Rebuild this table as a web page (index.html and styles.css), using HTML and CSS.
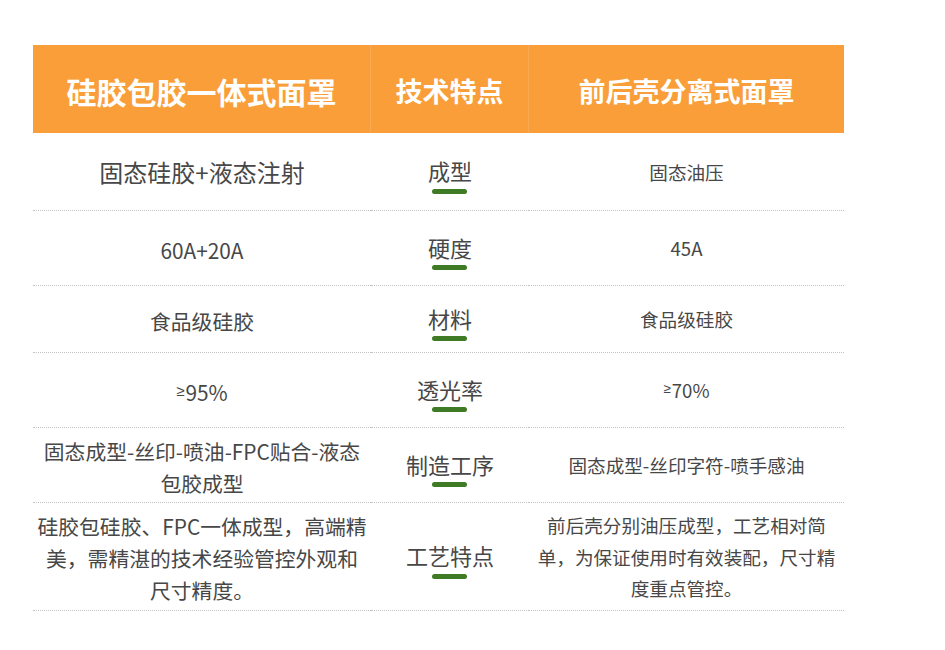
FILE: index.html
```html
<!DOCTYPE html>
<html lang="zh-CN">
<head>
<meta charset="utf-8">
<title>硅胶包胶一体式面罩 vs 前后壳分离式面罩</title>
<link rel="stylesheet" href="styles.css">
</head>
<body>
<div class="table">
  <div class="th th-left big">硅胶包胶一体式面罩</div>
  <div class="th th-mid">技术特点</div>
  <div class="th th-right">前后壳分离式面罩</div>

  <div class="td left xl">固态硅胶+液态注射</div>
  <div class="td mid"><span class="label">成型</span></div>
  <div class="td right">固态油压</div>

  <div class="td left">60A+20A</div>
  <div class="td mid"><span class="label">硬度</span></div>
  <div class="td right">45A</div>

  <div class="td left">食品级硅胶</div>
  <div class="td mid"><span class="label">材料</span></div>
  <div class="td right">食品级硅胶</div>

  <div class="td left"><span class="ge">≥</span>95%</div>
  <div class="td mid"><span class="label">透光率</span></div>
  <div class="td right"><span class="ge">≥</span>70%</div>

  <div class="td left">固态成型-丝印-喷油-FPC贴合-液态<br>包胶成型</div>
  <div class="td mid"><span class="label">制造工序</span></div>
  <div class="td right">固态成型-丝印字符-喷手感油</div>

  <div class="td left">硅胶包硅胶、FPC一体成型，高端精<br>美，需精湛的技术经验管控外观和<br>尺寸精度。</div>
  <div class="td mid"><span class="label">工艺特点</span></div>
  <div class="td right">前后壳分别油压成型，工艺相对简<br>单，为保证使用时有效装配，尺寸精<br>度重点管控。</div>
</div>
</body>
</html>
```
FILE: styles.css
```css
html, body {
  margin: 0;
  padding: 0;
  background: #ffffff;
}

body {
  padding: 45px 0 0 33px;
  font-family: "Noto Sans CJK SC", "Noto Sans", sans-serif;
  color: #474747;
}

.table {
  display: grid;
  grid-template-columns: 338px 158px 315px;
  grid-template-rows: 88px 78px 75px 67px 75px 75px 108px;
  width: 811px;
}

.th {
  background: #f99e39;
  color: #ffffff;
  font-weight: 700;
  font-size: 27px;
  display: flex;
  align-items: center;
  justify-content: center;
  padding-top: 3px;
  box-sizing: border-box;
}

.th-left {
  border-right: 1px solid rgba(255, 255, 255, 0.12);
}

.th-mid {
  border-right: 1px solid rgba(255, 255, 255, 0.12);
}

.th.big {
  font-size: 30px;
}

.td {
  display: flex;
  align-items: center;
  justify-content: center;
  text-align: center;
  white-space: nowrap;
  border-bottom: 1px dotted #c2c2c2;
  box-sizing: border-box;
  padding: 0;
  min-width: 0;
}

.left {
  font-size: 20.8px;
  line-height: 32px;
  padding-top: 3px;
}

.left.xl {
  font-size: 24px;
  padding-top: 0;
}

.right {
  font-size: 18.6px;
  line-height: 31.5px;
}

.mid {
  padding-bottom: 2px;
}

.label {
  position: relative;
  display: inline-block;
  font-size: 22px;
  line-height: 1.3;
}

.label::after {
  content: "";
  position: absolute;
  left: 50%;
  top: calc(100% + 4px);
  width: 35px;
  height: 5px;
  margin-left: -17.5px;
  border-radius: 3px;
  background: #3f7a25;
}

.ge {
  font-family: "Liberation Sans", "DejaVu Sans", sans-serif;
  font-size: 0.72em;
  margin-right: 1px;
  position: relative;
  top: -1px;
}
```
